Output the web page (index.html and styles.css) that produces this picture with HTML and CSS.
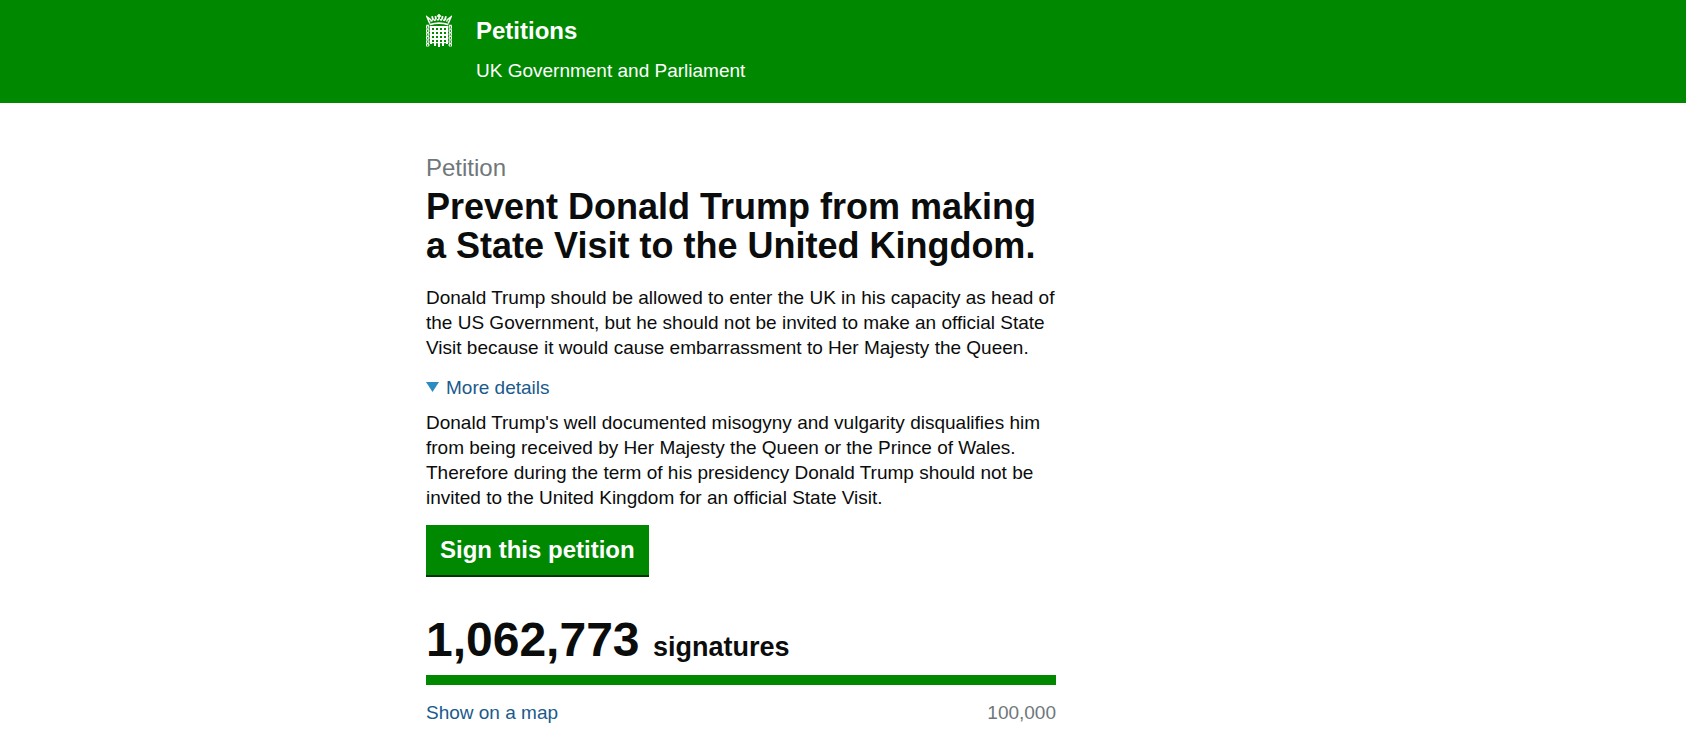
FILE: index.html
```
<!DOCTYPE html>
<html lang="en">
<head>
    <meta charset="UTF-8">
    <meta name="viewport" content="width=device-width, initial-scale=1.0">
    <title>Prevent Donald Trump from making a State Visit to the United Kingdom. - Petitions</title>
    <link rel="stylesheet" href="styles.css">
</head>
<body>
    <header class="header">
        <div class="container header-inner">
            <!-- portcullis -->
            <svg class="logo" width="26" height="33" viewBox="0 0 26 33" fill="none" stroke="#fff" aria-hidden="true">
                <!-- crown -->
                <path d="M3.6 10.6Q13 7.6 22.4 10.6" stroke-width="1.8"/>
                <path d="M3.8 9.5L1 3L5.2 6.2M22.2 9.5L25 3L20.8 6.2" stroke-width="1.5"/>
                <path d="M4.5 7.2Q13 4.2 21.5 7.2" stroke-width="1.6" stroke-dasharray="2.2 1"/>
                <path d="M6 2.2L7.2 6M9.4 2L10 5.4M16.6 2L16 5.4M20 2.2L18.8 6" stroke-width="1.8"/>
                <path d="M13 0V5.5M11 2H15" stroke-width="1.6"/>
                <!-- gate -->
                <path d="M5 12V30M9 12V32M13 12V33M17 12V32M21 12V30" stroke-width="2"/>
                <path d="M4 13H22M4 17H22M4 21H22M4 25H22" stroke-width="2"/>
                <path d="M4 28.6H22" stroke-width="1.2"/>
                <!-- chains -->
                <g stroke-width="1.2">
                    <path d="M1.6 10.8V33M24.4 10.8V33" stroke-width="2.6" stroke-dasharray="1.4 2.2"/>
                    <path d="M0.6 12V32M2.8 12V32M23.2 12V32M25.4 12V32" stroke-dasharray="2.4 1.2"/>
                </g>
            </svg>
            <div>
                <a class="site-name" href="#">Petitions</a>
                <p class="tagline">UK Government and Parliament</p>
            </div>
        </div>
    </header>

    <main class="container">
        <div class="petition">
            <p class="page-context">Petition</p>
            <h1>Prevent Donald Trump from making a State Visit to the United Kingdom.</h1>
            <p>Donald Trump should be allowed to enter the UK in his capacity as head of the US Government, but he should not be invited to make an official State Visit because it would cause embarrassment to Her Majesty the Queen.</p>

            <details class="details" open>
                <summary>
                    <svg width="13" height="13" viewBox="0 0 13 13" aria-hidden="true"><path d="M0 1H13L6.5 11Z" fill="#2b8cc4"/></svg>
                    <span>More details</span>
                </summary>
                <p>Donald Trump's well documented misogyny and vulgarity disqualifies him from being received by Her Majesty the Queen or the Prince of Wales. Therefore during the term of his presidency Donald Trump should not be invited to the United Kingdom for an official State Visit.</p>
            </details>

            <button class="button" type="button">Sign this petition</button>

            <p class="signature-count"><strong>1,062,773</strong> <span class="signature-label">signatures</span></p>
            <div class="graph"><div class="graph-bar" style="width: 100%"></div></div>
            <div class="graph-footer">
                <a href="#">Show on a map</a>
                <span class="goal">100,000</span>
            </div>
        </div>
    </main>
</body>
</html>
```
FILE: styles.css
```
body {
    margin: 0;
    font-family: "Liberation Sans", Arial, sans-serif;
    font-size: 19px;
    line-height: 25px;
    color: #0b0c0c;
    background-color: #fff;
}
p,
h1 {
    margin: 0;
}
a {
    color: #1a5a8c;
    text-decoration: none;
}
a:hover {
    text-decoration: underline;
}
.container {
    box-sizing: border-box;
    width: 100%;
    max-width: 834px;
    margin: 0 auto;
}

/* header */
.header {
    color: #fff;
    background-color: #008800;
    padding: 14px 0 20px;
}
.header-inner {
    display: flex;
    align-items: flex-start;
    gap: 24px;
}
.logo {
    flex: none;
}
.site-name {
    display: block;
    color: #fff;
    font-size: 24px;
    line-height: 34px;
    font-weight: bold;
}
.tagline {
    margin-top: 10px;
}

/* petition */
.petition {
    max-width: 630px;
    padding: 50px 0 25px;
}
.page-context {
    font-size: 24px;
    line-height: 30px;
    color: #6f777b;
}
h1 {
    font-size: 36px;
    line-height: 39px;
    margin: 4px 0 20px;
}
.details {
    margin: 15px 0;
}
.details summary {
    display: flex;
    align-items: center;
    gap: 7px;
    width: fit-content;
    margin-bottom: 10px;
    color: #1a5a8c;
    cursor: pointer;
    list-style: none;
}
.button {
    display: block;
    padding: 10px 14px;
    border: 0;
    border-bottom: 2px solid #003600;
    color: #fff;
    background-color: #008800;
    font-family: inherit;
    font-size: 24px;
    line-height: 30px;
    font-weight: bold;
    cursor: pointer;
}
.button:hover {
    background-color: #006b00;
}

/* signatures */
.signature-count {
    margin: 38px 0 10px;
    font-size: 48px;
    line-height: 50px;
    font-weight: bold;
}
.signature-label {
    font-size: 27px;
    line-height: 30px;
}
.graph {
    background-color: #dee0e2;
}
.graph-bar {
    height: 10px;
    background-color: #008800;
}
.graph-footer {
    display: flex;
    justify-content: space-between;
    margin-top: 15px;
}
.goal {
    color: #6f777b;
}
```
